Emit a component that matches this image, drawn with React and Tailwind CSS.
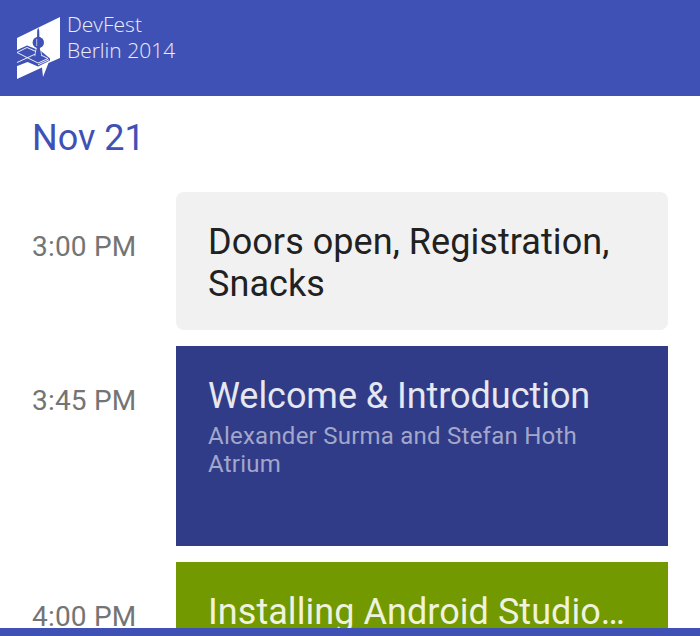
import React from "react";

function Logo() {
  return (
    <svg viewBox="0 0 48 66" className="h-[66px] w-12 shrink-0" aria-hidden="true">
      <path d="M44 1 V42 L32.5 47 L27 61 L26 51.5 L1 63 V22 Z" fill="#fff" />
      <path d="M0 34.5 L11 29.5 L25 35 L34 42.5 V44.5 L22 50.5 L11.5 46 L0 50.5 Z" fill="#3f51b5" />
      <path
        d="M1 36.5 L11 31.5 L21 36 M1 36.5 L22 47 L32 42.5 L25 39 M1 46.5 L19 38.2 M22 48.8 L33 43.8"
        fill="none" stroke="#fff" strokeWidth="0.9" />
      <path d="M18.8 40.5 L20.8 32 L21.2 14.5 L22.2 11.5 L23.2 14.5 L23.8 32 L25.8 40.5 Q22.3 42.5 18.8 40.5 Z" fill="#3f51b5" />
      <circle cx="22.3" cy="26.5" r="5.7" fill="#3f51b5" />
      <path d="M20.7 23 V30" stroke="#c5cbe9" strokeWidth="0.9" />
      <path d="M20 33 L18.8 40.2 M24.6 33 L25.8 40.2" stroke="#fff" strokeWidth="0.7" />
    </svg>
  );
}

function Session({ time, className, children }) {
  return (
    <div className="flex shrink-0 items-start pr-8 pl-8">
      <time className="w-36 shrink-0 pt-[38px] text-[28px] leading-[34px] tracking-[0.2px] whitespace-nowrap text-[#747474]">
        {time}
      </time>
      <article className={`min-w-0 grow px-8 pt-[29px] ${className}`}>{children}</article>
    </div>
  );
}

export default function App() {
  return (
    <div className="flex h-[636px] w-[700px] flex-col overflow-hidden bg-white font-['Roboto',sans-serif]">
      <header className="flex h-24 shrink-0 items-start bg-[#3f51b5] pt-4 pl-4 text-white">
        <Logo />
        <div className="-mt-[5px] ml-[3px] font-['Open_Sans',sans-serif] text-[21px] leading-[26px] font-light text-white/90">
          <div>DevFest</div>
          <div>Berlin 2014</div>
        </div>
      </header>
      <main className="flex min-h-0 grow flex-col gap-4 overflow-hidden">
        <h1 className="h-20 shrink-0 pt-[21px] pl-8 text-[36px] leading-[42px] text-[#3f51b5]">Nov 21</h1>
        <Session time="3:00 PM" className="h-[138px] rounded-lg bg-[#f1f1f1]">
          <h2 className="text-[36px] leading-[42px] tracking-[0.06px] text-[#212121]">Doors open, Registration,<br />Snacks</h2>
        </Session>
        <Session time="3:45 PM" className="h-[200px] bg-[#303c87]">
          <h2 className="text-[36px] leading-[42px] tracking-[-0.05px] whitespace-nowrap text-[#e6e7f0]">Welcome &amp; Introduction</h2>
          <p className="pt-[5px] text-[24px] leading-[28px] tracking-[0.24px] whitespace-nowrap text-[#a2a7cb]">
            Alexander Surma and Stefan Hoth<br />Atrium
          </p>
        </Session>
        <Session time="4:00 PM" className="h-[200px] bg-[#739900]">
          <h2 className="text-[36px] leading-[42px] tracking-[0.05px] whitespace-nowrap text-[#eef2de]">Installing Android Studio…</h2>
        </Session>
      </main>
      <footer className="h-2 shrink-0 bg-[#3f51b5]" />
    </div>
  );
}
